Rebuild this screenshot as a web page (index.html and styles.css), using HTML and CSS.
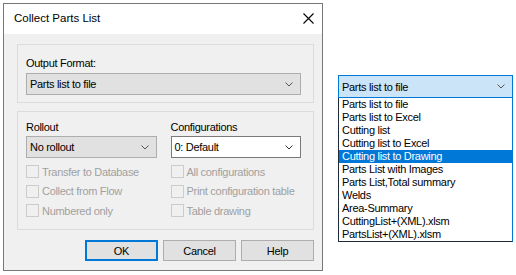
FILE: index.html
```html
<!DOCTYPE html>
<html>
<head>
  <title>Collect Parts List</title>
  <link rel="stylesheet" href="styles.css">
</head>
<body>
  <div class="page">
    <div class="dialog">
      <div class="titlebar">
        <span class="title">Collect Parts List</span>
        <svg class="close" width="11" height="11" viewBox="0 0 11 11">
          <path d="M0.5 0.5 L10.5 10.5 M10.5 0.5 L0.5 10.5" stroke="#000" stroke-width="1.1" fill="none"/>
        </svg>
      </div>

      <div class="dialog-body">
        <div class="group group-format">
          <label class="field-label">Output Format:</label>
          <div class="combo combo-gray">
            <span>Parts list to file</span>
            <svg class="chevron" width="8" height="5" viewBox="0 0 8 5"><path d="M0.5 0.5 L4 4 L7.5 0.5" stroke="#555" fill="none"/></svg>
          </div>
        </div>

        <div class="group group-options">
          <div class="column">
            <label class="field-label">Rollout</label>
            <div class="combo combo-gray">
              <span>No rollout</span>
              <svg class="chevron" width="8" height="5" viewBox="0 0 8 5"><path d="M0.5 0.5 L4 4 L7.5 0.5" stroke="#555" fill="none"/></svg>
            </div>
            <div class="checks">
              <div class="check"><span class="box"></span>Transfer to Database</div>
              <div class="check"><span class="box"></span>Collect from Flow</div>
              <div class="check"><span class="box"></span>Numbered only</div>
            </div>
          </div>
          <div class="column">
            <label class="field-label">Configurations</label>
            <div class="combo combo-white">
              <span>0: Default</span>
              <svg class="chevron" width="8" height="5" viewBox="0 0 8 5"><path d="M0.5 0.5 L4 4 L7.5 0.5" stroke="#333" fill="none"/></svg>
            </div>
            <div class="checks">
              <div class="check"><span class="box"></span>All configurations</div>
              <div class="check"><span class="box"></span>Print configuration table</div>
              <div class="check"><span class="box"></span>Table drawing</div>
            </div>
          </div>
        </div>

        <div class="buttons">
          <button type="button" class="btn btn-default">OK</button>
          <button type="button" class="btn">Cancel</button>
          <button type="button" class="btn">Help</button>
        </div>
      </div>
    </div>

    <div class="dropdown">
      <div class="combo combo-open">
        <span>Parts list to file</span>
        <svg class="chevron" width="8" height="5" viewBox="0 0 8 5"><path d="M0.5 0.5 L4 4 L7.5 0.5" stroke="#555" fill="none"/></svg>
      </div>
      <ul class="list">
        <li>Parts list to file</li>
        <li>Parts list to Excel</li>
        <li>Cutting list</li>
        <li>Cutting list to Excel</li>
        <li class="selected">Cutting list to Drawing</li>
        <li>Parts List with Images</li>
        <li>Parts List,Total summary</li>
        <li>Welds</li>
        <li>Area-Summary</li>
        <li>CuttingList+(XML).xlsm</li>
        <li>PartsList+(XML).xlsm</li>
      </ul>
    </div>
  </div>
</body>
</html>
```

FILE: styles.css
```css
body {
  margin: 0;
  background-color: #fff;
  font-family: "Liberation Sans", Arial, sans-serif;
  font-size: 11px;
  letter-spacing: -0.3px;
  color: #000;
}

.page {
  display: flex;
  align-items: flex-start;
  padding: 3px;
}

.dialog {
  width: 318px;
  height: 266px;
  border: 1px solid #777;
  background-color: #f0f0f0;
  display: flex;
  flex-direction: column;
}

.titlebar {
  height: 30px;
  background-color: #fff;
  display: flex;
  align-items: center;
  justify-content: space-between;
  padding: 0 8px 0 10px;
}

.title {
  font-size: 11.5px;
  letter-spacing: 0;
  padding-bottom: 2px;
}

.close {
  margin-bottom: 1px;
}

.dialog-body {
  padding: 10px 8px 0 13px;
  display: flex;
  flex-direction: column;
}

.group {
  border: 1px solid #dcdcdc;
  padding: 0 12px 0 8px;
}

.group-format {
  padding-top: 11px;
  box-sizing: border-box;
  height: 59px;
}

.group-options {
  margin-top: 8px;
  height: 119px;
  box-sizing: border-box;
  padding-top: 8px;
  display: flex;
  gap: 14px;
}

.column {
  width: 131px;
  display: flex;
  flex-direction: column;
}

.field-label {
  display: block;
  line-height: 14px;
  margin-bottom: 3px;
}

.column .field-label {
  margin-bottom: 2px;
}

.combo {
  height: 22px;
  box-sizing: border-box;
  display: flex;
  align-items: center;
  justify-content: space-between;
  padding: 0 7px 0 3px;
  border: 1px solid #adadad;
}

.combo-gray {
  background-color: #e1e1e1;
}

.combo-white {
  background-color: #fff;
  border-color: #7a7a7a;
}

.checks {
  margin-top: 4px;
  color: #a0a0a0;
}

.check {
  height: 19.5px;
  display: flex;
  align-items: center;
  white-space: nowrap;
}

.box {
  width: 13px;
  height: 13px;
  flex-shrink: 0;
  box-sizing: border-box;
  border: 1px solid #cccccc;
  background-color: #f0f0f0;
  margin-right: 3px;
}

.buttons {
  display: flex;
  justify-content: flex-end;
  gap: 5px;
  margin-top: 10px;
}

.btn {
  width: 73px;
  height: 21px;
  box-sizing: border-box;
  border: 1px solid #adadad;
  background-color: #e1e1e1;
  font-family: inherit;
  font-size: 11px;
  letter-spacing: -0.3px;
  padding: 0;
}

.btn-default {
  border: 2px solid #0078d7;
}

.dropdown {
  margin-left: 15px;
  margin-top: 72px;
  width: 176px;
}

.combo-open {
  height: 23px;
  background-color: #cce4f7;
  border-color: #0078d7;
}

.list {
  list-style: none;
  margin: 0;
  padding: 0;
  background-color: #fff;
  border: 1px solid #1e2a3a;
  border-top: none;
  border-right-color: #0078d7;
}

.list li {
  height: 13px;
  line-height: 13px;
  padding-left: 3px;
}

.list .selected {
  background-color: #0078d7;
  color: #fff;
}
```
